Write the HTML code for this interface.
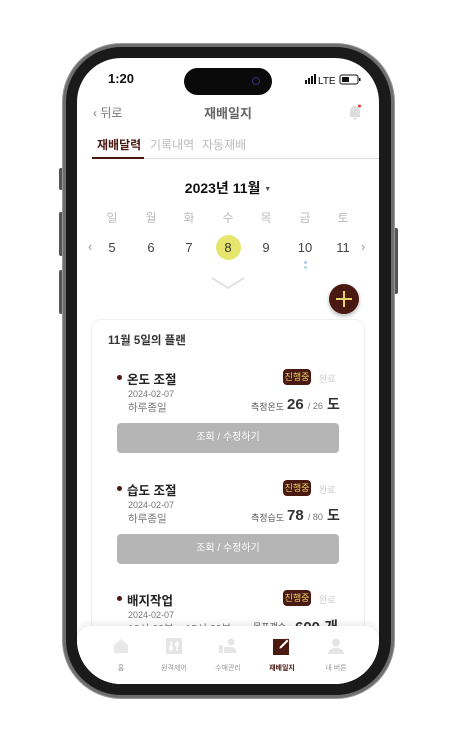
<!DOCTYPE html>
<html><head><meta charset="utf-8"><style>
*{margin:0;padding:0;box-sizing:border-box}
body{width:462px;height:755px;background:#fff;position:relative;overflow:hidden;font-family:"Liberation Sans","Noto Sans CJK KR",sans-serif}
.abs{position:absolute}
.frame{left:63px;top:44px;width:331px;height:654px;border-radius:58px;background:#1a1a1a;border:3px solid #6e6e6e;box-shadow:0 0 0 1px #999}
.btn{background:#555;border-radius:2px}
.screen{left:77px;top:58px;width:302px;height:626px;border-radius:44px;background:#fff;overflow:hidden}
.t{position:absolute;white-space:nowrap}
.c{transform:translateX(-50%)}
.wd{color:#bbb;font-size:12px;top:151px}
.dt{color:#444;font-size:13px;top:182px}
.badge{position:absolute;background:#4a1a12;color:#e8d36a;font-size:9px;border-radius:4px;width:28px;height:16px;line-height:16px;text-align:center}
.done{position:absolute;color:#ccc;font-size:9px}
.gbtn{position:absolute;left:40px;width:222px;height:30px;background:#b5b5b5;border-radius:4px;color:#fff;font-size:10px;text-align:center;line-height:30px}
.tl{position:absolute;font-size:12.5px;font-weight:bold;color:#222}
.bul{position:absolute;width:5px;height:5px;border-radius:50%;background:#4a1a12}
.sm{position:absolute;font-size:9.5px;color:#777}
.nav{font-size:7px;color:#999;top:605px}
</style></head><body>
<div class="abs btn" style="left:59px;top:168px;width:4px;height:22px"></div>
<div class="abs btn" style="left:59px;top:212px;width:4px;height:44px"></div>
<div class="abs btn" style="left:59px;top:270px;width:4px;height:44px"></div>
<div class="abs btn" style="left:394px;top:228px;width:4px;height:66px"></div>
<div class="abs frame"></div>
<div class="abs screen">
  <div class="t" style="left:31px;top:13px;font-size:13px;font-weight:bold;color:#111">1:20</div>
  <div class="abs" style="left:107px;top:10px;width:88px;height:27px;border-radius:14px;background:#0a0a0a"></div>
  <div class="abs" style="left:175px;top:19px;width:8px;height:8px;border-radius:50%;border:1.5px solid #3a2a8a"></div>
  <svg class="abs" style="left:228px;top:16px" width="60" height="12">
    <rect x="0" y="6" width="2" height="4" fill="#111"/><rect x="3" y="4" width="2" height="6" fill="#111"/><rect x="6" y="2" width="2" height="8" fill="#111"/><rect x="9" y="0" width="2" height="10" fill="#111"/>
    <text x="13" y="10" font-size="10" font-family="Liberation Sans" fill="#111">LTE</text>
    <rect x="35" y="1" width="18" height="9" rx="2" fill="none" stroke="#111"/><rect x="37" y="3" width="7" height="5" fill="#111"/><rect x="54" y="4" width="1.5" height="3" fill="#111"/>
  </svg>
  <div class="t" style="left:16px;top:46px;font-size:12px;color:#777">‹ 뒤로</div>
  <div class="t c" style="left:151px;top:45px;font-size:13px;font-weight:bold;color:#666">재배일지</div>
  <svg class="abs" style="left:270px;top:45px" width="16" height="18"><path d="M3 13 L3 8 A5 5 0 0 1 13 8 L13 13 L14 14 L2 14 Z" fill="#ddd"/><rect x="6.5" y="14.5" width="3" height="2" fill="#ddd"/><circle cx="12.5" cy="3" r="1.5" fill="#e33"/></svg>
  <div class="t" style="left:20px;top:78px;font-size:12px;font-weight:bold;color:#4a1a12">재배달력</div>
  <div class="t" style="left:73px;top:78px;font-size:12px;color:#bbb">기록내역</div>
  <div class="t" style="left:125px;top:78px;font-size:12px;color:#bbb">자동재배</div>
  <div class="abs" style="left:15px;top:100px;width:287px;height:1px;background:#ddd"></div>
  <div class="abs" style="left:15px;top:99px;width:52px;height:2px;background:#4a1a12"></div>
  <div class="t c" style="left:151px;top:120px;font-size:14px;font-weight:bold;color:#111">2023년 11월 <span style="font-size:7px;color:#555;vertical-align:middle">▼</span></div>
  <div class="t wd c" style="left:35px">일</div><div class="t wd c" style="left:74px">월</div><div class="t wd c" style="left:112px">화</div><div class="t wd c" style="left:151px">수</div><div class="t wd c" style="left:189px">목</div><div class="t wd c" style="left:228px">금</div><div class="t wd c" style="left:266px">토</div>
  <div class="abs" style="left:139px;top:177px;width:25px;height:25px;border-radius:50%;background:#e6e66c"></div>
  <div class="t" style="left:11px;top:181px;font-size:13px;color:#999">‹</div>
  <div class="t" style="left:284px;top:181px;font-size:13px;color:#999">›</div>
  <div class="t dt c" style="left:35px">5</div><div class="t dt c" style="left:74px">6</div><div class="t dt c" style="left:112px">7</div><div class="t dt c" style="left:151px;color:#333">8</div><div class="t dt c" style="left:189px">9</div><div class="t dt c" style="left:228px">10</div><div class="t dt c" style="left:266px">11</div>
  <div class="abs" style="left:227px;top:203px;width:3px;height:3px;border-radius:50%;background:#a9cbe8"></div>
  <div class="abs" style="left:227px;top:208px;width:3px;height:3px;border-radius:50%;background:#a9dcd8"></div>
  <svg class="abs" style="left:134px;top:218px" width="34" height="14"><path d="M1 2 L17 12 L33 2" fill="none" stroke="#e2e2e2" stroke-width="2"/></svg>
  <div class="abs" style="left:252px;top:226px;width:30px;height:30px;border-radius:50%;background:#4a1a12;box-shadow:0 2px 4px rgba(0,0,0,.3)"></div>
  <div class="abs" style="left:266px;top:233px;width:2px;height:16px;background:#e8d36a"></div>
  <div class="abs" style="left:259px;top:240px;width:16px;height:2px;background:#e8d36a"></div>
  <div class="abs" style="left:14px;top:261px;width:274px;height:400px;border:1px solid #f0f0f0;border-radius:10px;background:#fff"></div>
  <div class="t" style="left:31px;top:274px;font-size:11.5px;font-weight:bold;color:#333">11월 5일의 플랜</div>

  <div class="bul" style="left:40px;top:317px"></div>
  <div class="tl" style="left:50px;top:311px">온도 조절</div>
  <div class="badge" style="left:206px;top:311px">진행중</div><div class="done" style="left:242px;top:314px">완료</div>
  <div class="sm" style="left:51px;top:331px;font-size:9px">2024-02-07</div>
  <div class="sm" style="left:51px;top:342px;font-size:10.5px">하루종일</div>
  <div class="sm" style="left:174px;top:342px;font-size:9px;color:#555">측정온도</div>
  <div class="t" style="left:210px;top:336px;font-size:15px;font-weight:bold;color:#333">26 <span style="font-size:9px;font-weight:normal;color:#777">/ 26</span> <span style="font-size:14px">도</span></div>
  <div class="gbtn" style="top:365px">조회 / 수정하기</div>

  <div class="bul" style="left:40px;top:428px"></div>
  <div class="tl" style="left:50px;top:422px">습도 조절</div>
  <div class="badge" style="left:206px;top:422px">진행중</div><div class="done" style="left:242px;top:425px">완료</div>
  <div class="sm" style="left:51px;top:442px;font-size:9px">2024-02-07</div>
  <div class="sm" style="left:51px;top:453px;font-size:10.5px">하루종일</div>
  <div class="sm" style="left:174px;top:453px;font-size:9px;color:#555">측정습도</div>
  <div class="t" style="left:210px;top:447px;font-size:15px;font-weight:bold;color:#333">78 <span style="font-size:9px;font-weight:normal;color:#777">/ 80</span> <span style="font-size:14px">도</span></div>
  <div class="gbtn" style="top:476px">조회 / 수정하기</div>

  <div class="bul" style="left:40px;top:538px"></div>
  <div class="tl" style="left:50px;top:532px">배지작업</div>
  <div class="badge" style="left:206px;top:532px">진행중</div><div class="done" style="left:242px;top:535px">완료</div>
  <div class="sm" style="left:51px;top:552px;font-size:9px">2024-02-07</div>
  <div class="sm" style="left:51px;top:563px;font-size:10.5px">10시 00분 ~ 15시 30분</div>
  <div class="sm" style="left:176px;top:562px;font-size:9px;color:#555">목표갯수</div>
  <div class="t" style="left:218px;top:558px;font-size:15px;font-weight:bold;color:#333">600 개</div>

  <div class="abs" style="left:0;top:568px;width:302px;height:60px;background:#fff;border-radius:14px 14px 0 0;box-shadow:0 -3px 8px rgba(0,0,0,.08)"></div>
  <svg class="abs" style="left:36px;top:580px" width="16" height="16"><path d="M1 7 L8 1 L15 7 L15 15 L1 15 Z" fill="#e8e8e8"/></svg>
  <svg class="abs" style="left:89px;top:580px" width="16" height="16"><rect width="16" height="16" fill="#e5e5e5"/><path d="M5 3 V13 M11 3 V13" stroke="#fff" stroke-width="1.5"/><circle cx="5" cy="10" r="2" fill="#fff"/><circle cx="11" cy="6" r="2" fill="#fff"/></svg>
  <svg class="abs" style="left:142px;top:580px" width="18" height="16"><circle cx="12" cy="4" r="3.5" fill="#e5e5e5"/><rect x="0" y="7" width="4" height="8" fill="#e5e5e5"/><path d="M5 9 H12 Q17 9 17 13 V15 H5 Z" fill="#e5e5e5"/></svg>
  <svg class="abs" style="left:196px;top:579px" width="18" height="18"><rect x="0" y="2" width="16" height="16" fill="#4a1a12"/><path d="M6 12 L6.5 9.5 L14 2 L16 4 L8.5 11.5 Z" fill="#fff" stroke="#4a1a12" stroke-width="0.8"/></svg>
  <svg class="abs" style="left:251px;top:580px" width="16" height="16"><circle cx="8" cy="4.5" r="4" fill="#e5e5e5"/><path d="M0 16 Q0 10 8 10 Q16 10 16 16 Z" fill="#e5e5e5"/></svg>
  <div class="t nav c" style="left:44px">홈</div>
  <div class="t nav c" style="left:97px">원격제어</div>
  <div class="t nav c" style="left:151px">수매관리</div>
  <div class="t nav c" style="left:205px;color:#4a1a12;font-weight:bold">재배일지</div>
  <div class="t nav c" style="left:259px">내 버튼</div>
</div>
</body></html>
